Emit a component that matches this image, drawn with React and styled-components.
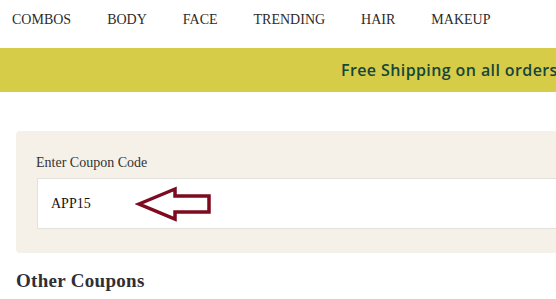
import React from 'react';
import styled, { createGlobalStyle } from 'styled-components';

const GlobalStyle = createGlobalStyle`
  body {
    margin: 0;
    background: #ffffff;
    font-family: "Liberation Serif", "Times New Roman", serif;
    overflow: hidden;
  }
`;

const Page = styled.div`
  width: 556px;
  overflow: hidden;
`;

const Nav = styled.nav`
  height: 48px;
  display: flex;
  align-items: center;
  gap: 36px;
  padding: 0 0 8px 12px;
  box-sizing: border-box;
  background: #ffffff;
`;

const NavItem = styled.a`
  font-size: 14px;
  color: #2b2b2b;
  text-decoration: none;
  white-space: nowrap;
`;

const Banner = styled.div`
  height: 44px;
  background: #d6cc48;
  display: flex;
  align-items: center;
  padding-left: 341px;
  white-space: nowrap;
  overflow: hidden;
  font-family: "Open Sans", "Noto Sans", sans-serif;
  font-weight: 600;
  font-size: 16px;
  letter-spacing: 0.4px;
  color: #15463b;
`;

const Main = styled.main`
  padding: 39px 0 0 16px;
`;

const CouponCard = styled.section`
  background: #f5f1e8;
  border-radius: 4px 0 0 4px;
  padding: 24px 0 24px 21px;
`;

const Label = styled.label`
  display: block;
  font-size: 14px;
  color: #333333;
  margin: 0 0 7px -1px;
`;

const InputWrap = styled.div`
  position: relative;
`;

const CodeInput = styled.div`
  height: 49px;
  background: #ffffff;
  border: 1px solid #e3e1dc;
  border-right: none;
  display: flex;
  align-items: center;
  padding-left: 13px;
  font-size: 14px;
  color: #111111;
`;

const Arrow = styled.svg`
  position: absolute;
  left: 98px;
  top: 8px;
`;

const Heading = styled.h2`
  margin: 17px 0 0;
  font-size: 19px;
  font-weight: 700;
  color: #2f2f35;
  letter-spacing: 0.3px;
`;

const navItems = ['COMBOS', 'BODY', 'FACE', 'TRENDING', 'HAIR', 'MAKEUP'];

export default function App() {
  return (
    <Page>
      <GlobalStyle />
      <Nav>
        {navItems.map(item => (
          <NavItem key={item}>{item}</NavItem>
        ))}
      </Nav>
      <Banner>Free Shipping on all orders</Banner>
      <Main>
        <CouponCard>
          <Label>Enter Coupon Code</Label>
          <InputWrap>
            <CodeInput>APP15</CodeInput>
            <Arrow width="80" height="36" viewBox="0 0 80 36">
              <polygon
                points="4,18 40,3 40,10 74,10 74,26 40,26 40,33"
                fill="none"
                stroke="#7d0a1f"
                strokeWidth="3.5"
                strokeLinejoin="miter"
              />
            </Arrow>
          </InputWrap>
        </CouponCard>
        <Heading>Other Coupons</Heading>
      </Main>
    </Page>
  );
}
